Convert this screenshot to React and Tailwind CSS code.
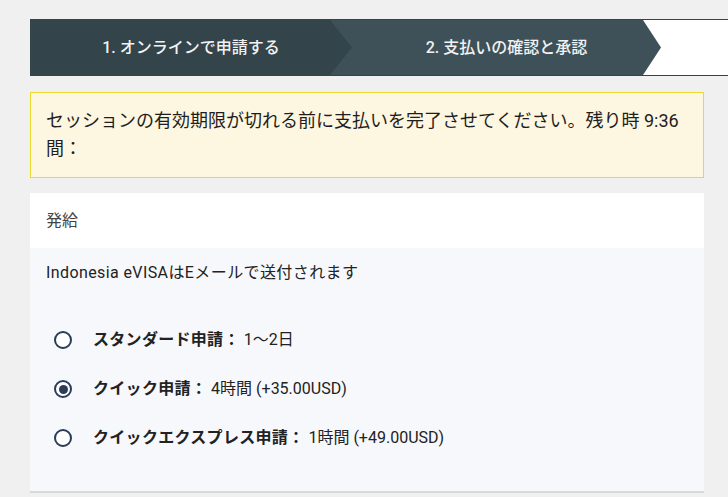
import React, { useState } from 'react';

const options = [
    { id: 'standard', label: 'スタンダード申請：', value: '1〜2日' },
    { id: 'quick', label: 'クイック申請：', value: '4時間 (+35.00USD)' },
    { id: 'express', label: 'クイックエクスプレス申請：', value: '1時間 (+49.00USD)' },
];

const App = () => {
    const [selected, setSelected] = useState('quick');

    return (
        <div className="min-h-[497px] w-[728px] overflow-hidden bg-[#f0f0f0] pt-[19px] pl-[30px] font-['Roboto','Noto_Sans_CJK_JP',sans-serif] text-[#222]">
            {/* Stepper */}
            <div className="flex h-[57px] w-[720px] border-y border-[#34444b] bg-white">
                <div className="relative z-10 flex w-[322px] shrink-0 items-center justify-center bg-[#34444b] text-[16px] font-medium text-[#f2f2f2] [clip-path:polygon(0_0,calc(100%_-_22px)_0,100%_50%,calc(100%_-_22px)_100%,0_100%)]">
                    1. オンラインで申請する
                </div>
                <div className="-ml-[22px] flex w-[331px] shrink-0 items-center justify-center bg-[#3e5159] pl-[22px] text-[16px] font-medium text-[#f2f2f2] [clip-path:polygon(0_0,calc(100%_-_18px)_0,100%_50%,calc(100%_-_18px)_100%,0_100%)]">
                    2. 支払いの確認と承認
                </div>
            </div>

            {/* Session warning */}
            <div className="mt-[16px] w-[674px] border border-[#ecd92e] bg-[#fdf6e1] px-[15px] py-[14px] text-[18px] leading-[28px] text-[#1e1e1e]">
                セッションの有効期限が切れる前に支払いを完了させてください。残り時 9:36
                <br />
                間：
            </div>

            {/* Delivery card */}
            <div className="mt-[15px] w-[674px] border-b-2 border-[#d9d9d9]">
                <div className="flex h-[55px] items-center bg-white px-[16px] text-[16px] text-[#444]">発給</div>
                <div className="bg-[#f7f8fc] px-[16px] pt-[14px] pb-[42px]">
                    <p className="text-[16px] leading-[22px] tracking-[0.4px]">Indonesia eVISAはEメールで送付されます</p>
                    <div className="mt-[45px] flex flex-col gap-[27px] pl-[8px]">
                        {options.map((opt) => (
                            <label key={opt.id} className="flex cursor-pointer items-center gap-[21px] text-[16px] leading-[22px]" onClick={() => setSelected(opt.id)}>
                                <span className="flex h-[18px] w-[18px] shrink-0 items-center justify-center rounded-full border-2 border-[#2c3b57] bg-white">
                                    {selected === opt.id && <span className="h-[9px] w-[9px] rounded-full bg-[#2c3b57]" />}
                                </span>
                                <span>
                                    <span className="font-bold tracking-[0.3px]">{opt.label}</span>
                                    <span className="ml-[4px]">{opt.value}</span>
                                </span>
                            </label>
                        ))}
                    </div>
                </div>
            </div>
        </div>
    );
};

export default App;
